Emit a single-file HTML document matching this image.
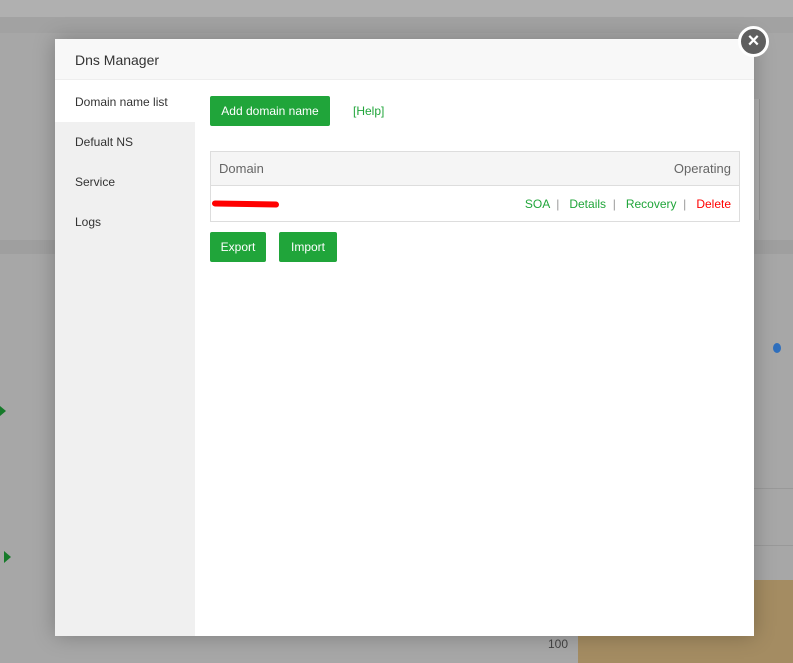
<!DOCTYPE html>
<html><head><style>
*{margin:0;padding:0;box-sizing:border-box}
body{width:793px;height:663px;overflow:hidden;background:#a7a7a7;font-family:"Liberation Sans",sans-serif;position:relative;font-size:12px}
.abs{position:absolute}
.btn{position:absolute;background:#20a53a;color:#fff;border-radius:2px;font-size:12px;text-align:center}
.g{color:#20a53a}
</style></head><body>
<div class="abs" style="left:0;top:0;width:793px;height:17px;background:#b0b0b0"></div>
<div class="abs" style="left:0;top:17px;width:793px;height:16px;background:#a2a2a2"></div>
<div class="abs" style="left:0;top:240px;width:793px;height:14px;background:#9f9f9f"></div>
<div class="abs" style="left:754px;top:99px;width:6px;height:121px;background:#b2b2b2;border-right:1px solid #999"></div>
<div class="abs" style="left:754px;top:488px;width:39px;height:1px;background:#999"></div>
<div class="abs" style="left:754px;top:545px;width:39px;height:1px;background:#999"></div>
<div class="abs" style="left:578px;top:580px;width:215px;height:83px;background:#a48c62;border-radius:30px 0 0 0"></div>
<div class="abs" style="left:548px;top:637px;font-size:12px;color:#444">100</div>
<div class="abs" style="left:773px;top:343px;width:8px;height:10px;border-radius:50%;background:#2f6fbd"></div>
<div class="abs" style="left:0;top:406px;border-left:6px solid #167a2a;border-top:5px solid transparent;border-bottom:5px solid transparent"></div>
<div class="abs" style="left:4px;top:551px;border-left:7px solid #167a2a;border-top:6px solid transparent;border-bottom:6px solid transparent"></div>

<div class="abs" style="left:55px;top:39px;width:699px;height:597px;background:#fff;box-shadow:0 0 20px rgba(0,0,0,.25)">
  <div class="abs" style="left:0;top:0;width:699px;height:41px;background:#f8f8f8;border-bottom:1px solid #eee"></div>
  <div class="abs" style="left:20px;top:13px;font-size:14px;color:#333">Dns Manager</div>
  <div class="abs" style="left:0;top:42px;width:140px;height:555px;background:#f0f0f0"></div>
  <div class="abs" style="left:0;top:42px;width:140px;height:41px;background:#fff"></div>
  <div class="abs" style="left:20px;top:56px;color:#333">Domain name list</div>
  <div class="abs" style="left:20px;top:96px;color:#333">Defualt NS</div>
  <div class="abs" style="left:20px;top:136px;color:#333">Service</div>
  <div class="abs" style="left:20px;top:176px;color:#333">Logs</div>

  <div class="btn" style="left:155px;top:57px;width:120px;height:30px;line-height:30px">Add domain name</div>
  <div class="abs g" style="left:298px;top:65px">[Help]</div>

  <div class="abs" style="left:155px;top:112px;width:530px;height:71px;border:1px solid #ddd"></div>
  <div class="abs" style="left:156px;top:113px;width:528px;height:34px;background:#f5f5f5;border-bottom:1px solid #ddd"></div>
  <div class="abs" style="left:164px;top:122px;color:#666;font-size:13px">Domain</div>
  <div class="abs" style="right:23px;top:122px;color:#666;font-size:13px">Operating</div>
  <div class="abs" style="left:157px;top:162px;width:67px;height:6px;background:#f00;border-radius:3px;transform:rotate(1deg)"></div>
  <div class="abs" style="right:23px;top:158px;color:#999"><span class="g">SOA</span> &nbsp;| &nbsp;&nbsp;<span class="g">Details</span> &nbsp;| &nbsp;&nbsp;<span class="g">Recovery</span> &nbsp;| &nbsp;&nbsp;<span style="color:#f00">Delete</span></div>

  <div class="btn" style="left:155px;top:193px;width:56px;height:30px;line-height:30px">Export</div>
  <div class="btn" style="left:224px;top:193px;width:58px;height:30px;line-height:30px">Import</div>
</div>
<div class="abs" style="left:738px;top:26px;width:31px;height:31px;border-radius:50%;background:#5e5e5e;border:3px solid #fff;color:#fff;font-size:20px;line-height:24px;text-align:center;font-weight:bold">×</div>
</body></html>
